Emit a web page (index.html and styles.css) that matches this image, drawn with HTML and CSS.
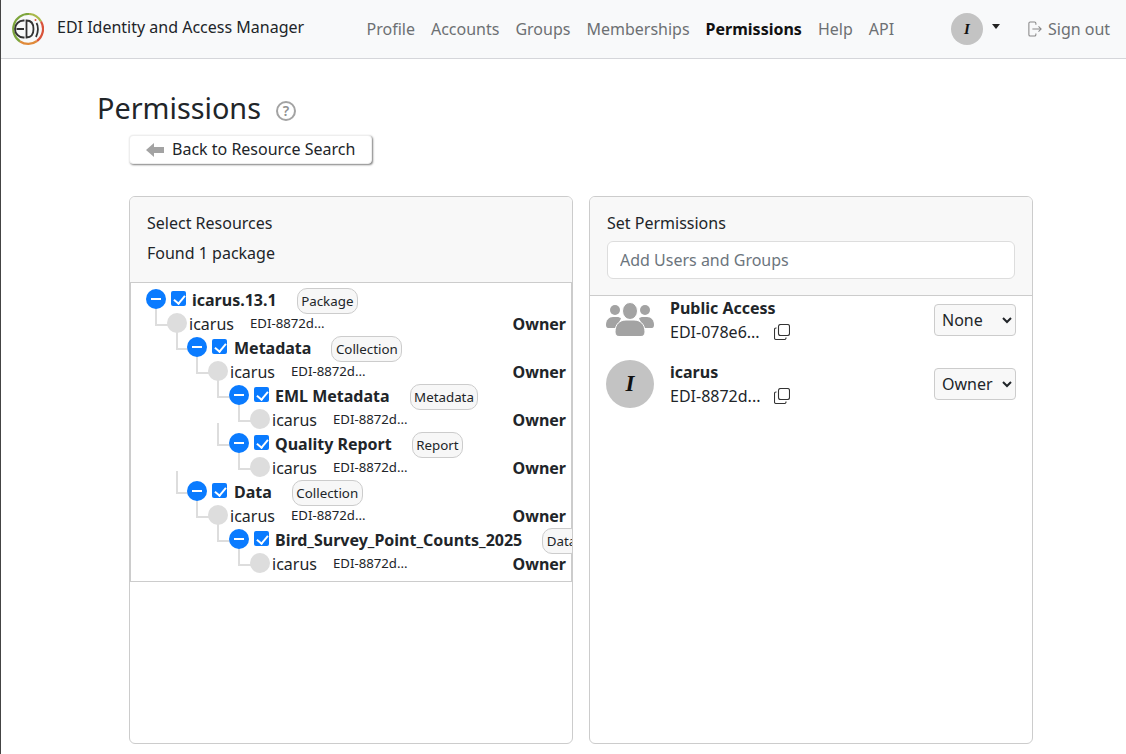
FILE: index.html
```html
<!DOCTYPE html>
<html lang="en">
<head>
    <meta charset="UTF-8">
    <title>EDI Identity and Access Manager - Permissions</title>
    <link rel="stylesheet" href="styles.css">
</head>
<body>

<nav class="navbar">
    <a class="brand">
        <svg class="brand-logo" viewBox="0 0 32 32" fill="none">
            <path d="M8 28.5A15 15 0 0 1 17 1" stroke="#7da53c" stroke-width="2.2"/>
            <path d="M17 1A15 15 0 0 1 29 8.5" stroke="#a9b84a" stroke-width="2.2"/>
            <path d="M29 8.5A15 15 0 0 1 25 28" stroke="#d9533a" stroke-width="2.2"/>
            <path d="M25 28A15 15 0 0 1 8 28.5" stroke="#e08a3a" stroke-width="2.2"/>
            <path d="M12.5 7.5H11.5A8.5 8.5 0 0 0 11.5 24.5H12.5M4.5 16H12" stroke="#333" stroke-width="1.8"/>
            <path d="M14.5 7.5C19.5 7.5 21.5 11.5 21.5 16S19.5 24.5 14.5 24.5V7.5Z" stroke="#333" stroke-width="1.8"/>
            <path d="M24.5 10C26.5 13 26.5 19 24 24" stroke="#333" stroke-width="1.8"/>
            <circle cx="23.5" cy="7" r="1" fill="#d9533a"/>
        </svg>
        <span class="brand-title">EDI Identity and Access Manager</span>
    </a>
    <div class="nav-links">
        <a class="nav-link">Profile</a>
        <a class="nav-link">Accounts</a>
        <a class="nav-link">Groups</a>
        <a class="nav-link">Memberships</a>
        <a class="nav-link active">Permissions</a>
        <a class="nav-link">Help</a>
        <a class="nav-link">API</a>
    </div>
    <div class="nav-user">
        <span class="avatar avatar-small">I</span>
        <span class="caret"></span>
    </div>
    <a class="nav-link sign-out">
        <svg class="sign-out-icon" viewBox="0 0 16 18" fill="none" stroke="#888" stroke-width="1.2">
            <path d="M9 4V2.5A1.5 1.5 0 0 0 7.5 1H2.5A1.5 1.5 0 0 0 1 2.5V15.5A1.5 1.5 0 0 0 2.5 17H7.5A1.5 1.5 0 0 0 9 15.5V14"/>
            <path d="M5 9H15M12 6L15 9L12 12"/>
        </svg>
        Sign out
    </a>
</nav>

<main class="page">
    <div class="title-row">
        <h1 class="page-title">Permissions</h1>
        <span class="help-icon">?</span>
    </div>
    <button class="back-button">
        <svg class="back-icon" viewBox="0 0 18 14"><path d="M0 7L8 0V4H18V10H8V14Z" fill="#a3a3a3"/></svg>
        Back to Resource Search
    </button>

    <div class="panels">
        <section class="panel">
            <div class="panel-header">
                <div class="header-line">Select Resources</div>
                <div class="header-line found">Found 1 package</div>
            </div>
            <div class="tree">
                <div class="node depth-0 first">
                    <span class="toggle"></span><span class="check"></span>
                    <span class="node-label">icarus.13.1</span><span class="badge">Package</span>
                </div>
                <div class="node depth-1">
                    <span class="dot"></span><span class="who">icarus</span>
                    <span class="who-id">EDI-8872d...</span><span class="perm">Owner</span>
                </div>
                <div class="node depth-2">
                    <span class="toggle"></span><span class="check"></span>
                    <span class="node-label">Metadata</span><span class="badge">Collection</span>
                </div>
                <div class="node depth-3">
                    <span class="dot"></span><span class="who">icarus</span>
                    <span class="who-id">EDI-8872d...</span><span class="perm">Owner</span>
                </div>
                <div class="node depth-4">
                    <span class="toggle"></span><span class="check"></span>
                    <span class="node-label">EML Metadata</span><span class="badge">Metadata</span>
                </div>
                <div class="node depth-5">
                    <span class="dot"></span><span class="who">icarus</span>
                    <span class="who-id">EDI-8872d...</span><span class="perm">Owner</span>
                </div>
                <div class="node depth-4">
                    <span class="toggle"></span><span class="check"></span>
                    <span class="node-label">Quality Report</span><span class="badge">Report</span>
                </div>
                <div class="node depth-5">
                    <span class="dot"></span><span class="who">icarus</span>
                    <span class="who-id">EDI-8872d...</span><span class="perm">Owner</span>
                </div>
                <div class="node depth-2">
                    <span class="toggle"></span><span class="check"></span>
                    <span class="node-label">Data</span><span class="badge">Collection</span>
                </div>
                <div class="node depth-3">
                    <span class="dot"></span><span class="who">icarus</span>
                    <span class="who-id">EDI-8872d...</span><span class="perm">Owner</span>
                </div>
                <div class="node depth-4">
                    <span class="toggle"></span><span class="check"></span>
                    <span class="node-label">Bird_Survey_Point_Counts_2025</span><span class="badge">Data</span>
                </div>
                <div class="node depth-5">
                    <span class="dot"></span><span class="who">icarus</span>
                    <span class="who-id">EDI-8872d...</span><span class="perm">Owner</span>
                </div>
            </div>
        </section>

        <section class="panel">
            <div class="panel-header">
                <div class="header-line">Set Permissions</div>
                <input class="search-input" type="text" placeholder="Add Users and Groups">
            </div>
            <div class="principal">
                <svg class="principal-icon" viewBox="0 0 48 34" fill="#a3a3a3">
                    <circle cx="9" cy="8" r="5"/>
                    <circle cx="39" cy="8" r="5"/>
                    <path d="M0 23C0 18 3 15 7 15H11C13 15 14 15.5 15 16.5L10 26H2C1 26 0 25 0 23Z"/>
                    <path d="M48 23C48 18 45 15 41 15H37C35 15 34 15.5 33 16.5L38 26H46C47 26 48 25 48 23Z"/>
                    <ellipse cx="24" cy="9" rx="7.5" ry="8.5" stroke="#fff" stroke-width="1"/>
                    <path d="M9 30C9 22 14 18 20 18H28C34 18 39 22 39 30C39 33 37 34.5 35 34.5H13C11 34.5 9 33 9 30Z" stroke="#fff" stroke-width="1"/>
                </svg>
                <div class="principal-info">
                    <div class="principal-name">Public Access</div>
                    <div class="principal-id">EDI-078e6...
                        <svg class="copy-icon" viewBox="0 0 16 16" fill="none" stroke="#333" stroke-width="1.1"><rect x="4.5" y="0.5" width="11" height="11" rx="2"/><path d="M2.5 4H2A1.5 1.5 0 0 0 0.5 5.5V14A1.5 1.5 0 0 0 2 15.5H10.5A1.5 1.5 0 0 0 12 14V13.5"/></svg>
                    </div>
                </div>
                <select class="perm-select"><option>None</option><option>Owner</option></select>
            </div>
            <div class="principal">
                <span class="avatar avatar-large">I</span>
                <div class="principal-info">
                    <div class="principal-name">icarus</div>
                    <div class="principal-id">EDI-8872d...
                        <svg class="copy-icon" viewBox="0 0 16 16" fill="none" stroke="#333" stroke-width="1.1"><rect x="4.5" y="0.5" width="11" height="11" rx="2"/><path d="M2.5 4H2A1.5 1.5 0 0 0 0.5 5.5V14A1.5 1.5 0 0 0 2 15.5H10.5A1.5 1.5 0 0 0 12 14V13.5"/></svg>
                    </div>
                </div>
                <select class="perm-select"><option>Owner</option><option>None</option></select>
            </div>
        </section>
    </div>
</main>

</body>
</html>
```

FILE: styles.css
```css
* {
    box-sizing: border-box;
}

body {
    margin: 0;
    height: 754px;
    overflow: hidden;
    border-left: 1px solid #444;
    font-family: "Noto Sans", sans-serif;
    font-size: 16px;
    color: #212529;
    background-color: white;
}

/* top bar */
.navbar {
    display: flex;
    align-items: center;
    height: 59px;
    padding-left: 11px;
    background-color: #f8f9fa;
    border-bottom: 1px solid #d5d6da;
}

.brand {
    display: flex;
    align-items: center;
    width: 354.5px;
}

.brand-logo {
    width: 32px;
    height: 32px;
    margin-right: 13px;
}

.brand-title {
    font-size: 16px;
    position: relative;
    top: -2px;
}

.nav-links {
    display: flex;
    gap: 16px;
    width: 584.5px;
}

.nav-link {
    color: #6d7073;
}

.nav-link.active {
    color: #111;
    font-weight: 700;
}

.nav-user {
    display: flex;
    align-items: center;
    width: 77px;
}

.caret {
    width: 0;
    height: 0;
    margin-left: 9px;
    margin-top: -5px;
    border-top: 5px solid #222;
    border-left: 4.5px solid transparent;
    border-right: 4.5px solid transparent;
}

.sign-out {
    display: flex;
    align-items: center;
    gap: 6px;
}

.sign-out-icon {
    width: 14px;
    height: 16px;
}

.avatar {
    display: flex;
    align-items: center;
    justify-content: center;
    flex-shrink: 0;
    border-radius: 50%;
    background-color: #c3c3c3;
    color: #111;
    font-family: "Liberation Serif", serif;
    font-style: italic;
    font-weight: 700;
}

.avatar-small {
    width: 32px;
    height: 32px;
    font-size: 15px;
}

.avatar-large {
    width: 48px;
    height: 48px;
    font-size: 23px;
}

/* page */
.page {
    padding-left: 96px;
}

.title-row {
    display: flex;
    align-items: center;
    height: 76px;
    padding-top: 20px;
}

.page-title {
    margin: 0;
    font-size: 28.8px;
    font-weight: 400;
}

.help-icon {
    display: flex;
    align-items: center;
    justify-content: center;
    width: 20px;
    height: 20px;
    margin-left: 15px;
    margin-top: 7px;
    border: 2px solid #a3a3a3;
    border-radius: 50%;
    color: #8f8f8f;
    font-size: 14px;
    font-weight: 600;
}

.back-button {
    display: flex;
    align-items: center;
    gap: 8px;
    width: 243px;
    height: 29px;
    margin-left: 32px;
    padding: 0 0 2px 16px;
    font-family: inherit;
    font-size: 16px;
    color: #212529;
    background-color: white;
    border: 1px solid #eee;
    border-radius: 4px;
    box-shadow: 1px 1px 2px rgba(0, 0, 0, 0.5);
}

.back-icon {
    width: 18px;
    height: 14px;
    margin-top: 2px;
}

.panels {
    display: grid;
    grid-template-columns: 444px 444px;
    gap: 16px;
    height: 548px;
    margin-top: 32px;
    margin-left: 32px;
}

.panel {
    border: 1px solid #ccc;
    border-radius: 6px;
    overflow: hidden;
}

.panel-header {
    padding: 15px 17px 16px;
    background-color: #f8f8f8;
    border-bottom: 1px solid #ccc;
}

.header-line {
    line-height: 22px;
}

.found {
    margin-top: 8px;
    margin-bottom: 2px;
}

.search-input {
    display: block;
    width: 100%;
    height: 38px;
    margin-top: 7px;
    padding: 0 12px;
    font-family: inherit;
    font-size: 16px;
    background-color: white;
    border: 1px solid #ddd;
    border-radius: 6px;
}

.search-input::placeholder {
    color: #6c757d;
}

/* resource tree */
.tree {
    padding: 5px 1px 0;
    height: 299px;
    border-bottom: 1px solid #ccc;
    box-shadow: inset 1px 0 #ccc, inset -1px 0 #ccc;
    overflow: hidden;
}

.node {
    position: relative;
    display: flex;
    align-items: center;
    height: 24px;
    padding-right: 5px;
    white-space: nowrap;
}

/* elbow line up to the parent node */
.node::before {
    content: "";
    position: absolute;
    top: -9px;
    width: 22px;
    height: 21px;
    border-left: 2px solid #ddd;
    border-bottom: 2px solid #ddd;
}

.node.first::before {
    display: none;
}

.depth-0 { padding-left: 15px; }
.depth-1 { padding-left: 36px; }
.depth-2 { padding-left: 56px; }
.depth-3 { padding-left: 77px; }
.depth-4 { padding-left: 98px; }
.depth-5 { padding-left: 119px; }

.depth-1::before { left: 24px; }
.depth-2::before { left: 45px; }
.depth-3::before { left: 65px; }
.depth-4::before { left: 86px; }
.depth-5::before { left: 107px; }

.toggle {
    position: relative;
    z-index: 1;
    flex-shrink: 0;
    width: 20px;
    height: 20px;
    margin-top: -2px;
    border-radius: 50%;
    background-color: #0a7bff;
}

.toggle::after {
    content: "";
    position: absolute;
    left: 5px;
    top: 9px;
    width: 10px;
    height: 2px;
    background-color: white;
}

.check {
    position: relative;
    flex-shrink: 0;
    width: 15px;
    height: 15px;
    margin-left: 5px;
    margin-top: -3px;
    border-radius: 2px;
    background-color: #0a7bff;
}

.check::after {
    content: "";
    position: absolute;
    left: 5px;
    top: 2px;
    width: 5px;
    height: 9px;
    border-right: 2px solid white;
    border-bottom: 2px solid white;
    transform: rotate(40deg);
}

.node-label {
    flex-shrink: 0;
    margin-left: 6px;
    font-weight: 700;
}

.depth-2 .node-label {
    margin-left: 7px;
}

.badge {
    flex-shrink: 0;
    margin-left: 20px;
    margin-top: 2px;
    padding: 0 3.5px;
    height: 26px;
    line-height: 24px;
    font-size: 13.33px;
    background-color: #f7f7f7;
    border: 1px solid #ccc;
    border-radius: 10px;
}

.dot {
    position: relative;
    z-index: 1;
    flex-shrink: 0;
    width: 20px;
    height: 20px;
    margin-top: -2px;
    border-radius: 50%;
    background-color: #ddd;
}

.who {
    margin-left: 2px;
    width: 61px;
}

.who-id {
    font-size: 13.2px;
    margin-top: -3px;
}

.perm {
    margin-left: auto;
    font-weight: 700;
}

/* principals */
.principal {
    display: flex;
    align-items: center;
    height: 48px;
    margin-bottom: 16px;
    padding: 0 16px;
}

.principal-icon {
    flex-shrink: 0;
    width: 48px;
    height: 34px;
    margin-top: -2px;
}

.principal-info {
    margin-left: 16px;
    flex-grow: 1;
    line-height: 24px;
}

.principal-name {
    font-weight: 700;
    margin-top: -1px;
}

.principal-id {
    display: flex;
    align-items: center;
}

.copy-icon {
    width: 16px;
    height: 16px;
    margin-left: 14px;
}

.perm-select {
    width: 82px;
    height: 32px;
    padding-left: 3px;
    font-family: inherit;
    font-size: 16px;
    color: #212529;
    background-color: #f8f8f8;
    border: 1px solid #ccc;
    border-radius: 4px;
}
```
